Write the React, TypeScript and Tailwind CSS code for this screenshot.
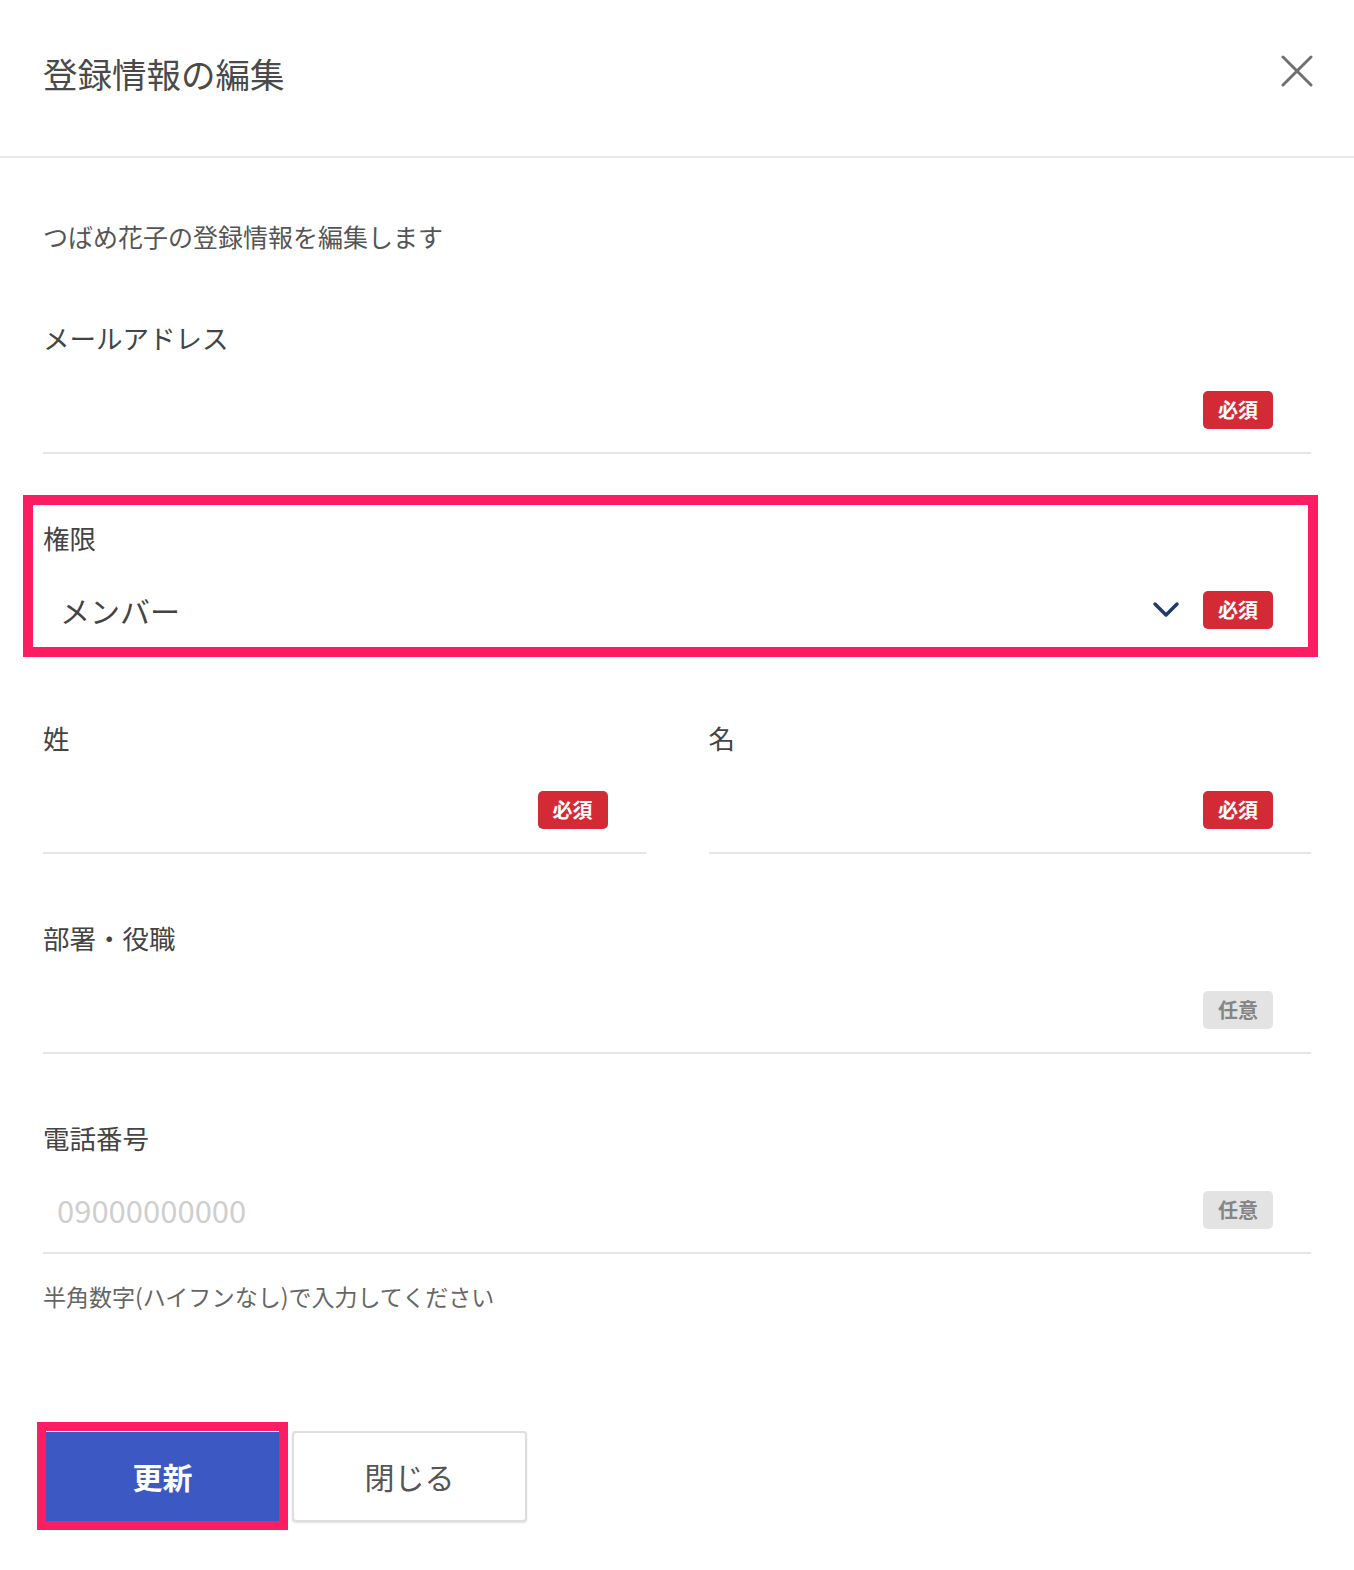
import type { ReactNode } from 'react'

export default function App() {
  return (
    <div className="min-h-screen w-full bg-white text-[#444] font-['Noto_Sans_CJK_JP','Noto_Sans',sans-serif]">
      {/* Header */}
      <header className="h-[158px] flex items-start justify-between pl-[43px] pr-[41px] pt-[53px] border-b-2 border-[#e8e8e8]">
        <h1 className="text-[34.5px] leading-[40px] text-[#4a4a4a]">登録情報の編集</h1>
        <button className="mt-[2px] text-[#707070]">
          <CloseIcon />
        </button>
      </header>

      <div className="px-[43px] pb-[49px]">
        <p className="mt-[63px] text-[25px] leading-[30px] text-[#555]">つばめ花子の登録情報を編集します</p>

        <div className="mt-[72px]">
          <Field label="メールアドレス">
            <Badge required />
          </Field>
        </div>

        {/* Role, highlighted */}
        <div className="relative mt-[69px]">
          <Field label="権限">
            <span className="pl-[17px] text-[30px] text-[#444]">メンバー</span>
            <span className="ml-auto mr-[23px] text-[#1f3a6e]">
              <ChevronIcon />
            </span>
            <Badge required inline />
          </Field>
          <div className="pointer-events-none absolute -left-[20px] -right-[7px] -top-[28px] -bottom-[3px] border-[10px] border-[#fc1d63]" />
        </div>

        <div className="mt-[69px] grid grid-cols-2 gap-[63px]">
          <Field label="姓">
            <Badge required />
          </Field>
          <Field label="名">
            <Badge required />
          </Field>
        </div>

        <div className="mt-[69px]">
          <Field label="部署・役職">
            <Badge />
          </Field>
        </div>

        <div className="mt-[69px]">
          <Field label="電話番号">
            <span className="pl-[14px] text-[31px] text-[#cfcfcf]">09000000000</span>
            <Badge />
          </Field>
        </div>

        <p className="mt-[27px] text-[23px] leading-[30px] text-[#666]">半角数字(ハイフンなし)で入力してください</p>

        {/* Actions */}
        <div className="mt-[120px] pl-[3px] flex items-center gap-[13px]">
          <div className="relative">
            <button className="w-[233px] h-[90px] bg-[#3c58c3] text-white text-[30px] font-bold">更新</button>
            <div className="pointer-events-none absolute -left-[9px] -right-[9px] -top-[10px] -bottom-[8px] border-[9px] border-[#fc1d63]" />
          </div>
          <button className="w-[235px] h-[91px] rounded-[4px] border-2 border-[#dedede] bg-white text-[30px] text-[#555] shadow-[0_1px_2px_rgba(0,0,0,0.12)]">
            閉じる
          </button>
        </div>
      </div>
    </div>
  )
}

function Field({ label, children }: { label: string; children: ReactNode }) {
  return (
    <div>
      <div className="h-[30px] leading-[30px] text-[26.5px] text-[#444]">{label}</div>
      <div className="mt-[15px] h-[86px] border-b-2 border-[#e6e6e6] flex items-center">{children}</div>
    </div>
  )
}

function Badge({ required, inline }: { required?: boolean; inline?: boolean }) {
  return (
    <span
      className={`${inline ? '' : 'ml-auto'} mr-[38px] w-[70px] h-[38px] rounded-[5px] flex items-center justify-center text-[20px] font-bold ${
        required ? 'bg-[#d42a36] text-white' : 'bg-[#e3e3e3] text-[#858585]'
      }`}
    >
      {required ? '必須' : '任意'}
    </span>
  )
}

function CloseIcon() {
  return (
    <svg viewBox="0 0 32 32" className="w-[32px] h-[32px]" fill="none" stroke="currentColor" strokeWidth="3" strokeLinecap="round">
      <path d="M2 2 L30 30 M30 2 L2 30" />
    </svg>
  )
}

function ChevronIcon() {
  return (
    <svg viewBox="0 0 28 18" className="w-[28px] h-[18px]" fill="none" stroke="currentColor" strokeWidth="3.5" strokeLinecap="round" strokeLinejoin="round">
      <path d="M3 3 L14 14 L25 3" />
    </svg>
  )
}
